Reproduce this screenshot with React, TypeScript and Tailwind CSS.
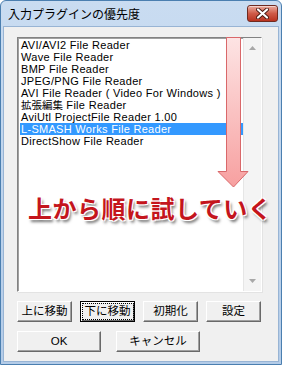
import { ReactNode } from 'react';

const items: ReactNode[] = [
    'AVI/AVI2 File Reader',
    'Wave File Reader',
    'BMP File Reader',
    'JPEG/PNG File Reader',
    'AVI File Reader ( Video For Windows )',
    <><span className="text-[10.5px] tracking-normal">拡張編集</span> File Reader</>,
    'AviUtl ProjectFile Reader 1.00',
    'L-SMASH Works File Reader',
    'DirectShow File Reader',
];
const selected = 7;

function Button({ label, width, isDefault }: { label: string; width: string; isDefault?: boolean }) {
    return (
        <button
            className={`${width} h-[21px] bg-[#f0f0f0] text-[11.5px] leading-none text-black flex items-center justify-center border ${
                isDefault
                    ? 'border-black shadow-[inset_1px_1px_0_#fff,inset_-1px_-1px_0_#696969]'
                    : 'border-t-white border-l-white border-b-[#696969] border-r-[#696969] shadow-[inset_-1px_-1px_0_#a0a0a0]'
            }`}
        >
            <span className={isDefault ? 'outline outline-1 outline-dotted outline-black px-[2px] py-[2px]' : ''}>{label}</span>
        </button>
    );
}

export default function App() {
    return (
        <div className="w-[285px] h-[367px] bg-white font-['Liberation_Sans','Noto_Sans_CJK_JP',sans-serif]">
            <div className="relative w-[282px] h-[365px] flex flex-col rounded-t-[6px] border border-[#4b7fb0] bg-gradient-to-b from-[#c9dcf1] to-[#b4cce8] overflow-hidden">
                {/* Title bar */}
                <div className="h-[25px] flex items-center justify-between pl-[7px] pr-[3px] shrink-0">
                    <span className="text-[12px] text-black font-['Noto_Sans_CJK_JP',sans-serif] mt-[1px]">入力プラグインの優先度</span>
                    <div className="w-[31px] h-[17px] mt-[-1px] rounded-[3px] border border-[#6f2a20] bg-gradient-to-b from-[#e9a99c] via-[#cf5b48] to-[#b9321f] flex items-center justify-center shadow-[inset_0_1px_0_rgba(255,255,255,0.5)]">
                        <svg width="13" height="11" viewBox="0 0 13 11">
                            <path d="M2 1.5 L11 9.5 M11 1.5 L2 9.5" stroke="#4a1a12" strokeWidth="4" strokeLinecap="round" />
                            <path d="M2 1.5 L11 9.5 M11 1.5 L2 9.5" stroke="#fff" strokeWidth="2.2" strokeLinecap="round" />
                        </svg>
                    </div>
                </div>

                {/* Client area */}
                <div className="flex-1 mx-[2px] mb-[2px] bg-[#f0f0f0] border border-[#98b4d4] flex flex-col pl-[13px] pt-[10px]">
                    <div className="w-[245px] h-[255px] flex border border-t-[#828282] border-l-[#828282] border-b-white border-r-white shadow-[inset_1px_1px_0_#a0a0a0,1px_1px_0_#e3e3e3] bg-white">
                        <div className="flex-1 pt-[1px] pl-[2px] text-[11px] leading-[12px] tracking-[0.3px] text-black">
                            {items.map((item, i) => (
                                <div
                                    key={i}
                                    className={`h-[12px] pl-[1px] whitespace-nowrap overflow-hidden ${i === selected ? 'bg-[#3399ff] text-white' : ''}`}
                                >
                                    {item}
                                </div>
                            ))}
                        </div>
                        <div className="w-[18px] bg-[#f4f4f4] border-l border-[#e6e6e6] flex flex-col items-center justify-between py-[8px]">
                            <svg width="7" height="4" viewBox="0 0 7 4"><path d="M0 4 L3.5 0 L7 4 Z" fill="#a8a8a8" /></svg>
                            <svg width="7" height="4" viewBox="0 0 7 4"><path d="M0 0 L3.5 4 L7 0 Z" fill="#a8a8a8" /></svg>
                        </div>
                    </div>

                    <div className="flex gap-[8px] mt-[9px]">
                        <Button label="上に移動" width="w-[55px]" />
                        <Button label="下に移動" width="w-[55px]" isDefault />
                        <Button label="初期化" width="w-[55px]" />
                        <Button label="設定" width="w-[55px]" />
                    </div>
                    <div className="flex gap-[15px] mt-[9px]">
                        <Button label="OK" width="w-[84px]" />
                        <Button label="キャンセル" width="w-[84px]" />
                    </div>
                </div>

                {/* Annotation arrow */}
                <svg className="absolute left-[216px] top-[36px]" width="32" height="152" viewBox="0 0 32 152">
                    <defs>
                        <linearGradient id="arrowGrad" x1="0" y1="0" x2="0" y2="1">
                            <stop offset="0%" stopColor="#fde4e4" />
                            <stop offset="100%" stopColor="#f7a0a0" />
                        </linearGradient>
                    </defs>
                    <path d="M9.5 0.5 H23.5 V134.5 H31 L16.5 150 L1 134.5 H9.5 Z" fill="url(#arrowGrad)" stroke="#d9686a" strokeWidth="1" />
                </svg>

                {/* Annotation text */}
                <div className="absolute left-[27px] top-[192px] text-[24px] leading-[30px] tracking-[0.5px] font-bold text-[#c4151c] font-['Noto_Sans_CJK_JP',sans-serif] whitespace-nowrap [text-shadow:-1px_-1px_0_#fff,1px_-1px_0_#fff,-1px_1px_0_#fff,1px_1px_0_#fff,0_0_2px_#fff,2px_3px_3px_rgba(0,0,0,0.55)]">
                    上から順に試していく
                </div>
            </div>
        </div>
    );
}
